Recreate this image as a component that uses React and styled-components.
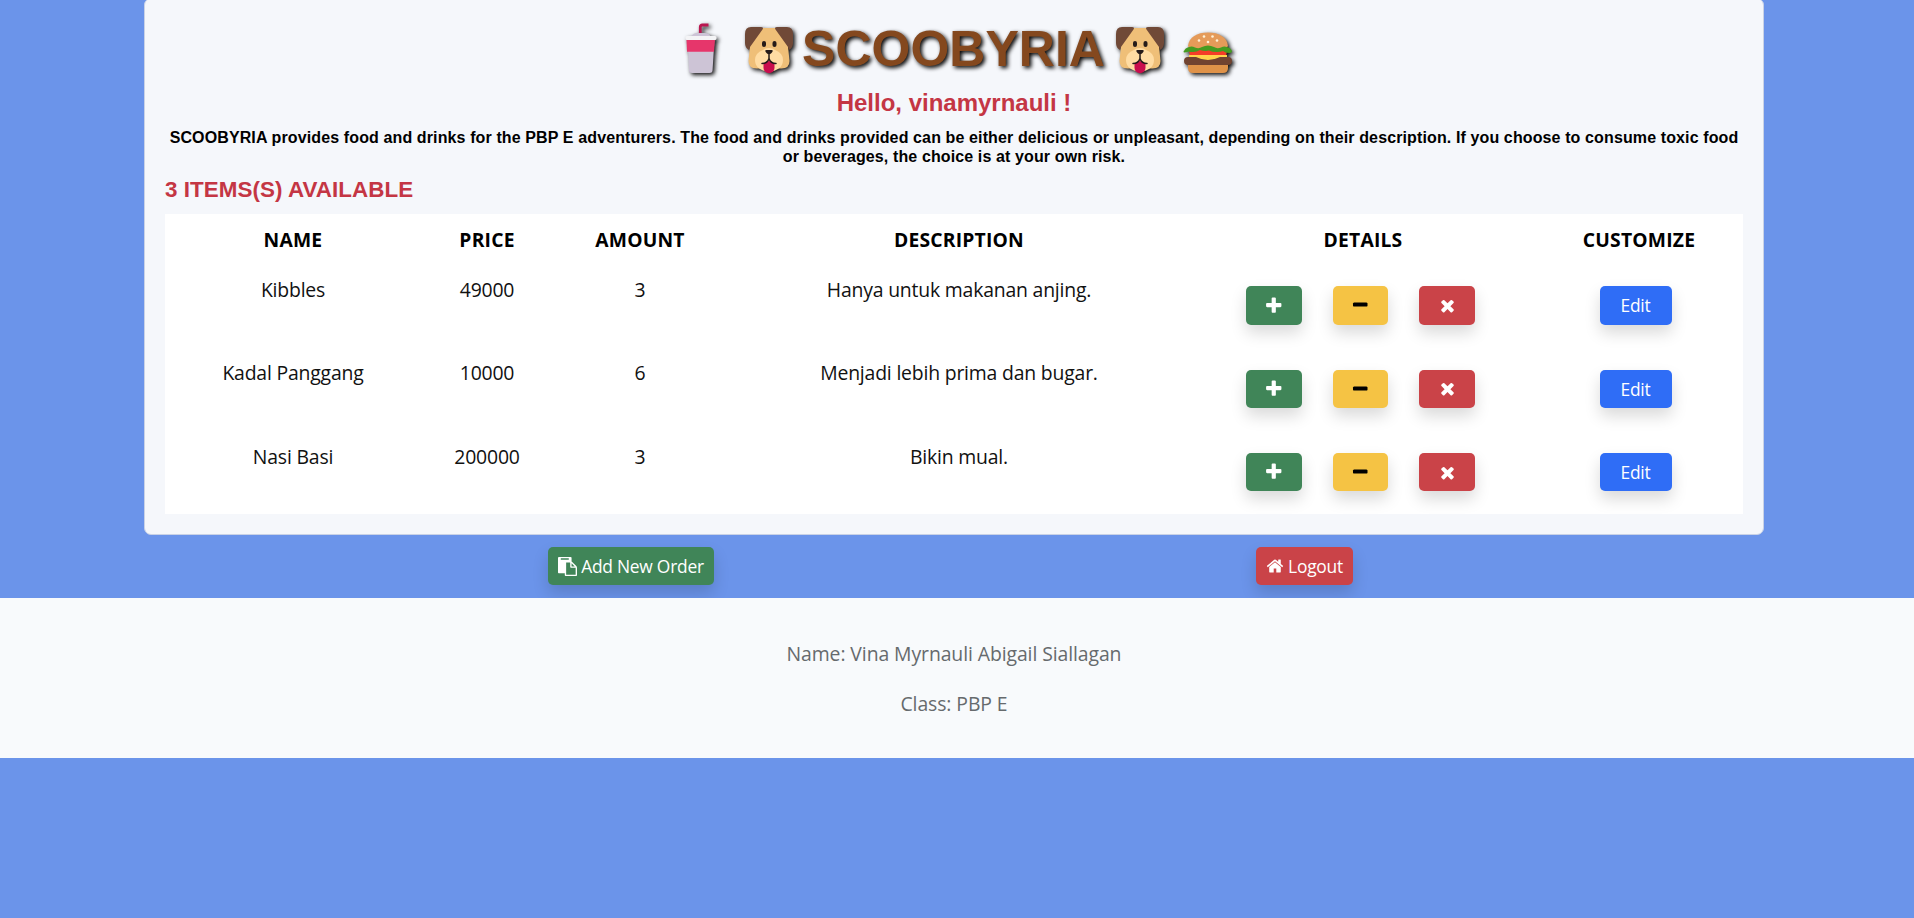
import React from "react";
import styled, { createGlobalStyle } from "styled-components";

const Global = createGlobalStyle`
  * { box-sizing: border-box; }
  html, body { margin: 0; background: #6b94ea; }
  body {
    font-family: "Open Sans", "Noto Sans", sans-serif;
    height: 918px;
    overflow: hidden;
  }
`;

const Page = styled.div`
  display: flex;
  flex-direction: column;
  width: 1914px;
  height: 918px;
`;

const Card = styled.main`
  width: 1620px;
  height: 537px;
  margin: -2px 0 0 144px;
  padding: 20px;
  border: 1px solid #c9d2e6;
  border-radius: 7px;
  background: #f5f7fb;
  font-family: "Liberation Sans", Arial, sans-serif;
  font-weight: 700;
`;

const Title = styled.h1`
  display: flex;
  justify-content: center;
  height: 60px;
  margin: 0 0 9px;
  padding-left: 1px;
  color: #84481e;
  font-size: 50px;
  line-height: 60px;
  white-space: nowrap;
  text-shadow: 2px 2px 4px #000;
`;

const Emoji = styled.svg`
  flex: none;
  width: 50px;
  height: 50px;
  margin: ${(p) => p.$top}px ${(p) => p.$right}px 0 ${(p) => p.$left}px;
  overflow: visible;
  filter: drop-shadow(2px 2px 2px rgba(0, 0, 0, 0.95));
`;

const Greeting = styled.h2`
  margin: 0 0 11px;
  color: #c43644;
  font-size: 24px;
  line-height: 29px;
  text-align: center;
`;

const Intro = styled.p`
  margin: 0 0 10px;
  color: #000;
  font-size: 16px;
  letter-spacing: 0.12px;
  line-height: 19.2px;
  text-align: center;
  white-space: nowrap;
`;

const Count = styled.h3`
  margin: 0 0 10.6px;
  color: #c43644;
  font-size: 22.4px;
  letter-spacing: 0.05px;
  line-height: 27px;
`;

const Table = styled.table`
  width: 1578px;
  height: 300px;
  table-layout: fixed;
  border-collapse: collapse;
  background: #fff;
  color: #111;
  font-family: "Open Sans", "Noto Sans", sans-serif;
  font-size: 19.4px;
  font-weight: 400;
  line-height: 30px;
  text-align: center;
`;

const Column = styled.col`
  width: ${(p) => p.$width}px;
`;

const HeadCell = styled.th`
  height: 50px;
  padding: 11px 0 9px ${(p) => p.$shift || 0}px;
  color: #000;
  font-weight: 700;
  font-size: 19.3px;
  letter-spacing: 0.2px;
`;

const Cell = styled.td`
  height: 83.33px;
  padding: 11px 0 0;
  vertical-align: top;
  letter-spacing: -0.19px;
`;

const Actions = styled.div`
  display: flex;
  justify-content: center;
  gap: 31px;
  padding-top: 11.3px;
  margin-left: ${(p) => p.$offset}px;
`;

const palette = {
  green: ["#408558", "#fff"],
  yellow: ["#f5c344", "#000"],
  red: ["#ca4348", "#fff"],
  blue: ["#2f6df6", "#fff"],
};

const Button = styled.button`
  display: inline-flex;
  align-items: center;
  justify-content: center;
  gap: 4px;
  width: ${(p) => p.$width}px;
  height: 38.4px;
  padding: 0;
  border: 0;
  border-radius: 5px;
  background: ${(p) => palette[p.$tone][0]};
  color: ${(p) => palette[p.$tone][1]};
  font-family: inherit;
  font-size: 17.4px;
  letter-spacing: -0.25px;
  line-height: 26px;
  white-space: nowrap;
  box-shadow: 0 8px 16px rgba(0, 0, 0, 0.15);
`;

const Glyph = styled.svg`
  flex: none;
  width: ${(p) => p.$size}px;
  height: ${(p) => p.$size}px;
  fill: currentColor;
`;

const Links = styled.nav`
  display: flex;
  flex: none;
  justify-content: space-around;
  width: 1347px;
  height: 63px;
  margin-left: 277px;
  padding-top: 12px;
`;

const Footer = styled.footer`
  flex: none;
  height: 160px;
  padding: 41px 6px 0 0;
  background: #f8fafc;
  color: #666a6d;
  font-size: 19.4px;
  line-height: 30px;
  text-align: center;
  letter-spacing: -0.09px;
`;

const FooterLine = styled.p`
  margin: 0 0 20px;
`;

const glyphs = {
  plus: "M1600 736v192q0 40-28 68t-68 28h-416v416q0 40-28 68t-68 28h-192q-40 0-68-28t-28-68v-416h-416q-40 0-68-28t-28-68v-192q0-40 28-68t68-28h416v-416q0-40 28-68t68-28h192q40 0 68 28t28 68v416h416q40 0 68 28t28 68z",
  minus: "M1600 736v192q0 40-28 68t-68 28h-1216q-40 0-68-28t-28-68v-192q0-40 28-68t68-28h1216q40 0 68 28t28 68z",
  times: "M1490 1322q0 40-28 68l-136 136q-28 28-68 28t-68-28l-294-294-294 294q-28 28-68 28t-68-28l-136-136q-28-28-28-68t28-68l294-294-294-294q-28-28-28-68t28-68l136-136q28-28 68-28t68 28l294 294 294-294q28-28 68-28t68 28l136 136q28 28 28 68t-28 68l-294 294 294 294q28 28 28 68z",
  home: "M1472 992v480q0 26-19 45t-45 19h-384v-384h-256v384h-384q-26 0-45-19t-19-45v-480q0-1 .5-3t.5-3l575-474 575 474q1 2 1 6zm223-69l-62 74q-8 9-21 11h-3q-13 0-21-7l-692-577-692 577q-12 8-24 7-13-2-21-11l-62-74q-8-10-7-23.5t11-21.5l719-599q32-26 76-26t76 26l244 204v-195q0-14 9-23t23-9h192q14 0 23 9t9 23v408l219 182q10 8 11 21.5t-7 23.5z",
  paste: "M768 1664h896v-640h-416q-40 0-68-28t-28-68v-416h-384v1152zm256-1440v-64q0-13-9.5-22.5t-22.5-9.5h-704q-13 0-22.5 9.5t-9.5 22.5v64q0 13 9.5 22.5t22.5 9.5h704q13 0 22.5-9.5t9.5-22.5zm256 672h299l-299-299v299zm512 128v672q0 40-28 68t-68 28h-960q-40 0-68-28t-28-68v-160h-544q-40 0-68-28t-28-68v-1344q0-40 28-68t68-28h1088q40 0 68 28t28 68v328q21 13 36 28l408 408q28 28 48 76t20 88z",
};

const Icon = ({ name, size }) => (
  <Glyph viewBox="0 0 1792 1792" $size={size} aria-hidden="true">
    <path d={glyphs[name]} />
  </Glyph>
);

const Cup = (p) => (
  <Emoji viewBox="0 0 50 50" {...p}>
    <path d="M24.300 10V3q0-2 2-2h6.200" fill="none" stroke="#ba1650" strokeWidth="2.800" />
    <path d="M15 13q2-4 6-4h8q4 0 6 4z" fill="#cdc4d6" />
    <path d="M11.500 15h27L36.500 46.500q-.2 2.500-3 2.500H16q-2.800 0-3-2.500z" fill="#cdc4d6" />
    <path d="M10.500 15.500h28.500l-1 12.300h-27z" fill="#e6366b" />
    <rect x="9.500" y="12" width="31" height="4" rx="1.500" fill="#f4f4f6" />
  </Emoji>
);

const Dog = (p) => (
  <Emoji viewBox="0 0 50 50" {...p}>
    <path d="M13 2h24q6 8 7 18l1.500 15q0 7.500-8 7.500H32l-7 4-7-4h-5.500q-8 0-8-7.500L6 20Q7 10 13 2z" fill="#efbf78" />
    <path d="M7 1h10q3 0 1.500 2.500L6 21l-1 3Q1 22 1 17V8Q1 1 7 1z" fill="#704937" />
    <path d="M43 1H33q-3 0-1.500 2.500L44 21l1 3q4-2 4-7V8q0-7-6-7z" fill="#704937" />
    <path d="M25 22q4 0 6 2 8 3 8 10c0 6-4 9-8 10.500L25 46.500 19 44.500C15 43 11 40 11 34q0-7 8-10 2-2 6-2z" fill="#ffdca3" />
    <path d="M19.500 38q5.500-6 11 0v3.500c0 7.500-11 7.500-11 0z" fill="#c90d4d" />
    <path d="M18 37.500q5.500 0 7-5v-4 4q1.500 5 7 5" fill="none" stroke="#251b19" strokeWidth="1.500" strokeLinecap="round" />
    <path d="M22.500 24h5q2.500 0 0 3L25 29l-2.500-2q-2.500-3 0-3z" fill="#251b19" />
    <rect x="18" y="15" width="4" height="6" rx="2" fill="#251b19" />
    <rect x="28.500" y="15" width="4" height="6" rx="2" fill="#251b19" />
  </Emoji>
);

const Burger = (p) => (
  <Emoji viewBox="0 0 50 50" {...p}>
    <path d="M5 36h40v6q0 5-5 5H10q-5 0-5-5z" fill="#df9248" />
    <path d="M5 20C6 11 14 6.500 25 6.500S44 11 45 20l-4 5H9z" fill="#e59b59" />
    <path d="M6 25q5-3 10-1h18q6-2 10 1l-1 5H7z" fill="#f43d28" />
    <path d="M6 29h38v4H6z" fill="#ffd34c" />
    <path d="M10 29h30q-7 5.500-15 5.500T10 29z" fill="#ffd34c" />
    <path d="M5 31h8q6 3 12 3t12-3h8q4 0 4 4t-4 4H5q-4 0-4-4t4-4z" fill="#714330" />
    <path d="M1 25q1-3 5-4 3-1 6 .5 4 1.500 7-.5 6-3 12 0 3 2 7 .5 3-1.500 6-.5 4 1 5 4 0 2-3 2-4 0-6-2-3 1-6 1-5 0-8-1.500-4 1-9-.5-3 2-7 2t-4-.5q-3 1-5 1-1-.5 0-2z" fill="#459b20" />
    <g fill="#fff2d8">
      <circle cx="21" cy="10.500" r="1.300" /><circle cx="29.500" cy="10.500" r="1.300" />
      <circle cx="16" cy="14.500" r="1.300" /><circle cx="25" cy="16" r="1.300" /><circle cx="34" cy="14.500" r="1.300" />
    </g>
  </Emoji>
);

const columns = [
  ["NAME", 256], ["PRICE", 132], ["AMOUNT", 174],
  ["DESCRIPTION", 464], ["DETAILS", 340, 4], ["CUSTOMIZE", 212, 4],
];

const items = [
  ["Kibbles", "49000", "3", "Hanya untuk makanan anjing."],
  ["Kadal Panggang", "10000", "6", "Menjadi lebih prima dan bugar."],
  ["Nasi Basi", "200000", "3", "Bikin mual."],
];

const ItemRow = ({ values }) => (
  <tr>
    {values.map((v, i) => <Cell key={i}>{v}</Cell>)}
    <Cell>
      <Actions $offset={-1}>
        <Button $tone="green" $width={56} aria-label="Add"><Icon name="plus" size={19.5} /></Button>
        <Button $tone="yellow" $width={55} aria-label="Subtract"><Icon name="minus" size={18.5} /></Button>
        <Button $tone="red" $width={56} aria-label="Remove"><Icon name="times" size={19} /></Button>
      </Actions>
    </Cell>
    <Cell>
      <Actions $offset={-3}><Button $tone="blue" $width={72}>Edit</Button></Actions>
    </Cell>
  </tr>
);

export default function App() {
  return (
    <Page>
      <Global />
      <Card>
        <Title>
          <Cup $top={5} $left={0} $right={10} />
          <Dog $top={7} $left={8} $right={8} />
          SCOOBYRIA
          <Dog $top={7} $left={10} $right={9} />
          <Burger $top={7} $left={9} $right={0} />
        </Title>
        <Greeting>Hello, vinamyrnauli !</Greeting>
        <Intro>
          SCOOBYRIA provides food and drinks for the PBP E adventurers. The food and drinks provided can be either delicious or unpleasant, depending on their description. If you choose to consume toxic food
          <br />
          or beverages, the choice is at your own risk.
        </Intro>
        <Count>3 ITEMS(S) AVAILABLE</Count>
        <Table>
          <colgroup>{columns.map(([n, w]) => <Column key={n} $width={w} />)}</colgroup>
          <thead><tr>{columns.map(([n, , s]) => <HeadCell key={n} $shift={s}>{n}</HeadCell>)}</tr></thead>
          <tbody>{items.map((v) => <ItemRow key={v[0]} values={v} />)}</tbody>
        </Table>
      </Card>
      <Links>
        <Button $tone="green" $width={166}><Icon name="paste" size={19} />Add New Order</Button>
        <Button $tone="red" $width={97}><Icon name="home" size={18} />Logout</Button>
      </Links>
      <Footer>
        <FooterLine>Name: Vina Myrnauli Abigail Siallagan</FooterLine>
        <FooterLine>Class: PBP E</FooterLine>
      </Footer>
    </Page>
  );
}
